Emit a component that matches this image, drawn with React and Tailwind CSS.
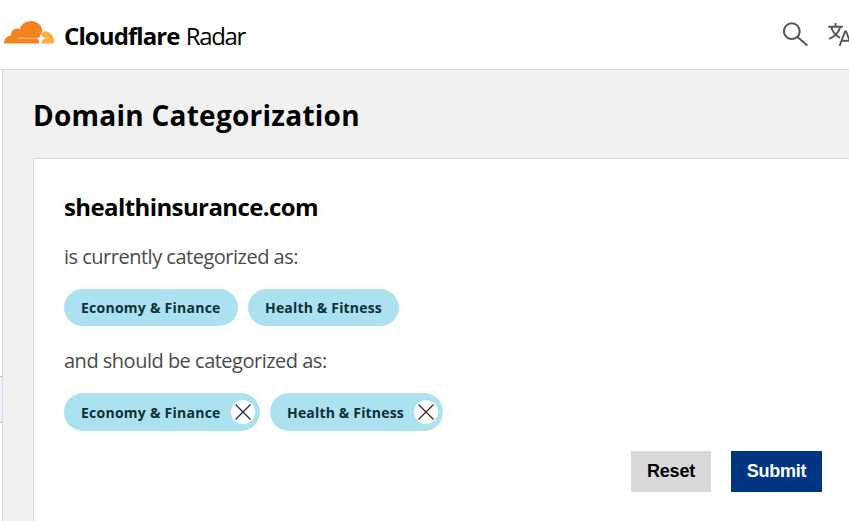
function CloudLogo() {
  return (
    <svg className="h-[24px] w-[52px] shrink-0" viewBox="3 20 52 24">
      <path
        fill="#f58220"
        d="M4 43.600C3.800 39.600 6.500 36 11.200 35.600C10.500 31 14.500 27.500 19.700 28.900C21.300 24 26 21 31 21C37 21 41.500 25 42.500 30.500L41 34V43.600Z"
      />
      <path
        fill="#fbad41"
        d="M43.600 31.200C49.500 30.800 54.300 35.200 54 41.400C54 42.200 53.900 42.900 53.700 43.600H40V34Z"
      />
      <path
        fill="#fff"
        d="M42.600 30.200L41.600 34.500L42.300 36.700L45 38.300L42.300 40L40.300 43.900H38.700L39.300 41.200L37.600 39L39.300 37L43.800 31Z"
      />
      <path d="M18 38.200h20M44 38.200h5" stroke="#fff" strokeWidth="0.700" strokeOpacity="0.750" />
    </svg>
  );
}

function SearchIcon() {
  return (
    <svg className="h-[26px] w-[27px]" viewBox="782 22 27 26" fill="none" stroke="#555" strokeWidth="2">
      <circle cx="790.800" cy="31.200" r="7.900" />
      <path d="M796.500 37l9.900 8.600" />
    </svg>
  );
}

function TranslateIcon() {
  return (
    <svg className="h-[26px] w-[21px] shrink-0" viewBox="828 22 21 26" fill="none" stroke="#555" strokeWidth="1.900">
      <path d="M828.300 26.700h14.500M835.500 23v3.700M831.200 27c1.200 5 5 8.500 8.800 11M840.200 27c-1.200 5-5.500 9.500-11 11.800" />
      <path d="M839.600 45.800l5.500-14.300h1l5.500 14.300M841.800 40.800h9" />
    </svg>
  );
}

function CloseIcon({ stroke }) {
  return (
    <span className="flex size-6 items-center justify-center rounded-full bg-white">
      <svg className="size-4" viewBox="0 0 16 16" fill="none" stroke={stroke} strokeWidth="1.300">
        <path d="M.5.5l15 15M15.500.5l-15 15" />
      </svg>
    </span>
  );
}

const pill =
  "flex items-center rounded-full bg-[#ace2ef] text-[14px] font-bold text-[#0b3039]";

export default function App() {
  return (
    <div className="flex h-[521px] w-[849px] flex-col overflow-hidden bg-white font-['Open_Sans','Noto_Sans',sans-serif] text-black">
      <header className="flex h-[70px] shrink-0 items-start border-b border-[#d9d9d9] pl-[3px]">
        <div className="flex pt-[20px]">
          <CloudLogo />
          <div className="ml-[9px] flex h-[32px] items-center whitespace-nowrap text-[24px]">
            <span className="font-bold tracking-[-0.9px]">Cloudflare</span>
            <span className="ml-[6px] tracking-[-1.3px]">Radar</span>
          </div>
        </div>
        <div className="ml-auto flex gap-[18px] pt-[22px]">
          <SearchIcon />
          <TranslateIcon />
        </div>
      </header>
      <div className="flex flex-1">
        <div className="w-[2px] shrink-0 pt-[306px]">
          <div className="h-[47px] border-y border-[#8db8fa] bg-[#eaf3ff]" />
        </div>
        <main className="flex flex-1 flex-col border-l border-[#d9d9d9] bg-[#f1f1f1] pl-[30px]">
          <h1 className="flex h-[88px] items-center whitespace-nowrap pt-[1px] text-[28px] font-bold tracking-[0.25px]">
            Domain Categorization
          </h1>
          <section className="flex flex-1 flex-col border-l border-t border-[#d9d9d9] bg-white pl-[30px] pr-[27px] pt-[30px]">
            <h2 className="h-[36px] text-[24px] leading-[36px] font-bold tracking-[-0.6px]">shealthinsurance.com</h2>
            <p className="mt-[17px] h-[30px] text-[20px] leading-[30px] text-[#4a4a4a] tracking-[-0.5px]">
              is currently categorized as:
            </p>
            <div className="mt-[17px] flex gap-[10px]">
              <span className={`${pill} h-[37px] w-[174px] pl-[17px] tracking-[0.25px]`}>Economy &amp; Finance</span>
              <span className={`${pill} h-[37px] w-[151px] pl-[17px] tracking-[0.17px]`}>Health &amp; Fitness</span>
            </div>
            <p className="mt-[20px] h-[30px] text-[20px] leading-[30px] text-[#4a4a4a] tracking-[-0.5px]">
              and should be categorized as:
            </p>
            <div className="mt-[17px] flex gap-[10px]">
              <span className={`${pill} h-[38px] w-[196px] justify-between pl-[17px] pr-[5px] tracking-[0.25px]`}>
                Economy &amp; Finance
                <CloseIcon stroke="#183247" />
              </span>
              <span className={`${pill} h-[38px] w-[173px] justify-between pl-[17px] pr-[5px] tracking-[0.17px]`}>
                Health &amp; Fitness
                <CloseIcon stroke="#3b2a1c" />
              </span>
            </div>
            <div className="mt-[20px] flex justify-end gap-[20px] font-['Liberation_Sans',Arial,sans-serif] text-[18px] font-bold tracking-[-0.25px]">
              <button className="h-[41px] w-[80px] bg-[#d9d9d9]">Reset</button>
              <button className="h-[41px] w-[91px] bg-[#003681] text-white">Submit</button>
            </div>
          </section>
        </main>
      </div>
    </div>
  );
}
